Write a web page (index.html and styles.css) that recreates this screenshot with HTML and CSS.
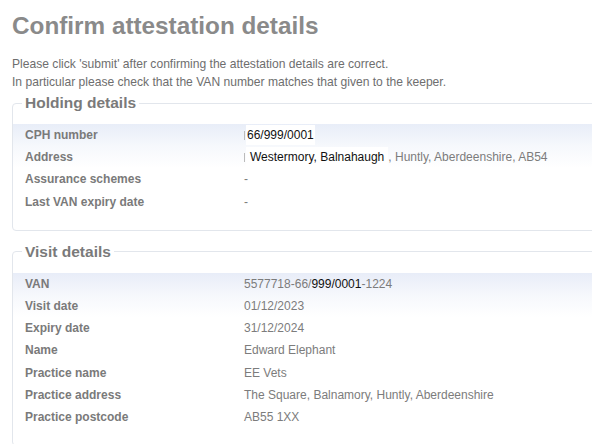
FILE: index.html
```html
<!DOCTYPE html>
<html lang="en">
<head>
<meta charset="utf-8">
<title>Confirm attestation details</title>
<link rel="stylesheet" href="styles.css">
</head>
<body>
<div class="page">
  <h1 class="title">Confirm attestation details</h1>
  <p class="intro">Please click 'submit' after confirming the attestation details are correct.<br>In particular please check that the VAN number matches that given to the keeper.</p>

  <fieldset class="panel">
    <legend class="panel-legend">Holding details</legend>
    <table class="details">
      <tr><th>CPH number</th><td><span class="tick"></span><span class="redact">66/999/0001</span></td></tr>
      <tr><th>Address</th><td><span class="tick"></span><span class="redact redact-wide">Westermory, Balnahaugh</span>, Huntly, Aberdeenshire, AB54</td></tr>
      <tr><th>Assurance schemes</th><td>-</td></tr>
      <tr><th>Last VAN expiry date</th><td>-</td></tr>
    </table>
  </fieldset>

  <fieldset class="panel panel-second">
    <legend class="panel-legend">Visit details</legend>
    <table class="details">
      <tr><th>VAN</th><td>5577718-66/<span class="dark">999/0001</span>-1224</td></tr>
      <tr><th>Visit date</th><td>01/12/2023</td></tr>
      <tr><th>Expiry date</th><td>31/12/2024</td></tr>
      <tr><th>Name</th><td>Edward Elephant</td></tr>
      <tr><th>Practice name</th><td>EE Vets</td></tr>
      <tr><th>Practice address</th><td>The Square, Balnamory, Huntly, Aberdeenshire</td></tr>
      <tr><th>Practice postcode</th><td>AB55 1XX</td></tr>
    </table>
  </fieldset>
</div>
</body>
</html>
```

FILE: styles.css
```css
html {
  overflow: hidden;
}
body {
  margin: 0;
  font-family: "Liberation Sans", Arial, sans-serif;
  background: #fff;
}
.page {
  width: 640px;
  padding: 12px 0 0 12px;
}
.title {
  margin: 0;
  font-size: 24.3px;
  line-height: 28px;
  font-weight: bold;
  color: #8a8a8a;
}
.intro {
  margin: 15px 0 0;
  font-size: 12.1px;
  line-height: 18px;
  color: #6e6e6e;
}
.panel {
  margin: 3px 0 0;
  padding: 0 0 17px;
  border: 1px solid #e2e6ec;
  border-radius: 4px;
  min-width: 0;
}
.panel-second {
  margin-top: 12px;
}
.panel-legend {
  margin-left: 9px;
  padding: 0 3px;
  font-size: 15.5px;
  line-height: 18px;
  font-weight: bold;
  color: #7a7a7a;
}
.details {
  width: 100%;
  margin-top: 12px;
  border-collapse: collapse;
  background: linear-gradient(to bottom, #e8edf8 0, #f6f8fc 22px, #ffffff 44px);
  font-size: 12px;
}
.details th,
.details td {
  padding: 4px 0;
  line-height: 14.2px;
  text-align: left;
  vertical-align: top;
}
.details th {
  width: 219px;
  padding-left: 12px;
  font-weight: bold;
  color: #7a7a7a;
}
.details td {
  color: #7c7c7c;
}
.tick {
  display: inline-block;
  width: 1px;
  height: 9px;
  margin-right: 1px;
  background: #bbb;
  vertical-align: -1px;
}
.redact {
  background: #fff;
  color: #111;
  padding: 3px 1px 3px 1px;
}
.redact-wide {
  padding: 3px 4px 3px 4px;
}
.dark {
  color: #111;
}
```
